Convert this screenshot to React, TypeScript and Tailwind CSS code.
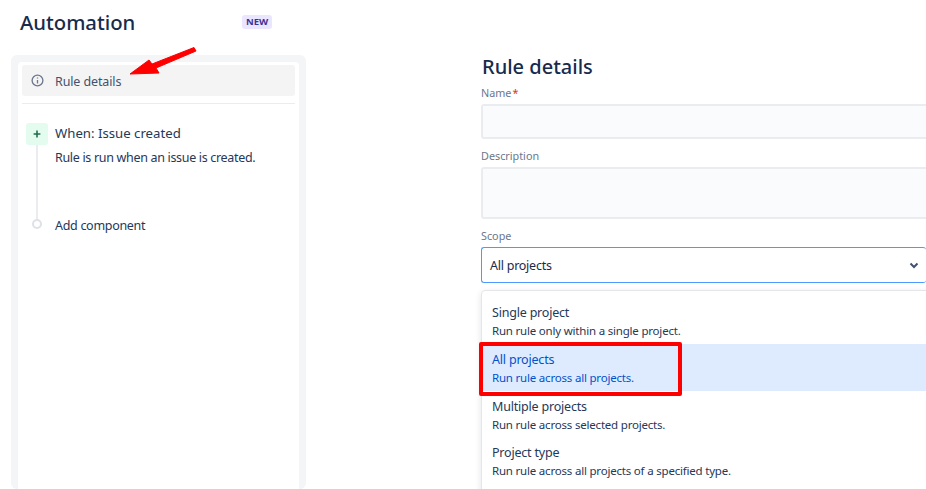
import React from "react";

function Option({ title, desc, active, tall }: { title: string; desc: string; active?: boolean; tall?: boolean }) {
  return (
    <div className={active ? "relative h-[47px] bg-[#deebff] pl-[10px] pt-[7px] text-[#0052cc]" : tall ? "h-[47px] pl-[10px] pt-[7px] text-[#253858]" : "h-[46px] pl-[10px] pt-[7px] text-[#253858]"}>
      <div className="text-[12.5px] leading-[18px] tracking-[-0.2px]">{title}</div>
      <div className="text-[11.5px] leading-[18px] -mt-[0.5px] tracking-[-0.2px]">{desc}</div>
      {active && (
        <div className="absolute left-[-3px] top-[-2px] w-[203px] h-[54px] border-[4px] border-[#ff0000] rounded-[2px]" />
      )}
    </div>
  );
}

export default function App() {
  return (
    <div className="relative w-[926px] h-[489px] overflow-hidden bg-white font-['Noto_Sans',sans-serif] text-[#253858]">
      <div className="flex items-center h-[44px] pl-[20px]">
        <h1 className="text-[20.3px] font-medium leading-[24px] text-[#172b4d] w-[222px]">Automation</h1>
        <span className="rounded-[3px] bg-[#eae6ff] px-[4px] h-[14px] flex items-center text-[9.5px] font-bold text-[#403294]">NEW</span>
      </div>
      <div className="flex mt-[11px] ml-[11px] h-[434px]">
        <aside className="w-[295px] shrink-0 rounded-[6px] bg-[#f4f5f7] pt-[7px] px-[7px]">
          <div className="h-full rounded-t-[4px] bg-white px-[4px] pt-[3px]">
            <div className="flex items-center h-[31px] rounded-[3px] bg-[#f4f4f4] pl-[9px] text-[12.5px] text-[#42526e]">
              <svg width="13" height="13" viewBox="0 0 13 13" fill="none" stroke="#6b778c" strokeWidth="1.3">
                <circle cx="6.5" cy="6.5" r="5.4" />
                <path d="M6.5 6v3.4M6.5 3.4v1.2" />
              </svg>
              <span className="ml-[11px] mt-[3px] tracking-[-0.12px]">Rule details</span>
            </div>
            <div className="mt-[7px] border-t border-[#ebecf0]" />
            <div className="relative mt-[19px] pl-[33px] h-[120px]">
              <div className="absolute left-[4px] top-0 flex h-[22px] w-[22px] items-center justify-center rounded-[3px] bg-[#e3fcef]">
                <svg width="10" height="10" viewBox="0 0 10 10" stroke="#216e4e" strokeWidth="1.6">
                  <path d="M5 1.6v6.8M1.6 5h6.8" />
                </svg>
              </div>
              <div className="absolute left-[14px] top-[22px] h-[74px] w-[2px] bg-[#ebecf0]" />
              <div className="absolute left-[10px] top-[96px] h-[10px] w-[10px] rounded-full border-2 border-[#dfe1e6] bg-white" />
              <div className="text-[13.2px] leading-[20px] text-[#253858]">When: Issue created</div>
              <div className="mt-[5px] text-[12.5px] leading-[20px] tracking-[-0.32px] text-[#253858]">Rule is run when an issue is created.</div>
              <div className="mt-[48px] text-[12.5px] leading-[20px] tracking-[-0.3px] text-[#253858]">Add component</div>
            </div>
          </div>
        </aside>
        <main className="ml-[175px] w-[500px] shrink-0 -mt-[1px]">
          <h2 className="mt-[1px] pl-[1px] text-[20px] font-medium leading-[24px] text-[#172b4d]">Rule details</h2>
          <div className="mt-[7px] text-[10.8px] leading-[14px] text-[#6b778c]">
            Name<span className="text-[#de350b] ml-[1px]">*</span>
          </div>
          <div className="mt-[4px] h-[35px] rounded-[3px] border-2 border-[#ebecf0] bg-[#fafbfc]" />
          <div className="mt-[10px] text-[10.8px] leading-[14px] text-[#6b778c]">Description</div>
          <div className="mt-[4px] h-[52px] rounded-[3px] border-2 border-[#ebecf0] bg-[#fafbfc]" />
          <div className="mt-[10px] text-[10.8px] leading-[14px] text-[#6b778c]">Scope</div>
          <div className="relative mt-[4px] h-[36px] w-[445px] flex items-center rounded-[3px] border border-[#4c9aff] border-r-0 pl-[8px] text-[12.5px] tracking-[-0.25px] text-[#172b4d]">
            <span className="mt-[2px]">All projects</span>
            <svg className="absolute left-[427px] top-[14px]" width="10" height="8" viewBox="0 0 10 8" fill="none" stroke="#42526e" strokeWidth="2">
              <path d="M1.5 1.5 5 5l3.5-3.5" />
            </svg>
          </div>
          <div className="mt-[7px] h-[220px] rounded-[4px] border border-[#e4e6ea] pt-[6px] shadow-[0_2px_6px_rgba(9,30,66,0.12)]">
            <Option tall title="Single project" desc="Run rule only within a single project." />
            <Option active title="All projects" desc="Run rule across all projects." />
            <Option title="Multiple projects" desc="Run rule across selected projects." />
            <Option title="Project type" desc="Run rule across all projects of a specified type." />
          </div>
        </main>
      </div>
      <svg className="absolute left-[125px] top-[42px]" width="76" height="36" viewBox="0 0 76 36" fill="#ff0000">
        <path d="M5 32 24 18 27 22 69 5.5 71 9 31 26 34 31Z" stroke="#ff0000" strokeWidth="1" strokeLinejoin="round" />
      </svg>
    </div>
  );
}
